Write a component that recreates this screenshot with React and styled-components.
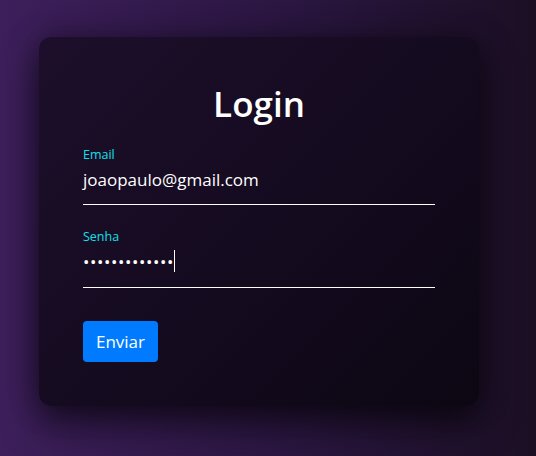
import React from "react";
import styled, { createGlobalStyle } from "styled-components";

const Global = createGlobalStyle`
  html, body { margin: 0; padding: 0; }
  body {
    width: 536px;
    height: 456px;
    overflow: hidden;
    font-family: "Open Sans", "Noto Sans", sans-serif;
    background: linear-gradient(to right, #3d1f5b 0%, #2c1743 50%, #1b0f24 100%);
  }
`;

const Page = styled.div`
  box-sizing: border-box;
  width: 536px;
  height: 456px;
  padding: 37px 57px 0 39px;
`;

const Card = styled.form`
  box-sizing: border-box;
  width: 440px;
  height: 369px;
  border-radius: 12px;
  padding: 40px 44px 0;
  background: linear-gradient(135deg, #1d0f2b 0%, #150b20 50%, #0c0713 100%);
  box-shadow: 0 18px 36px rgba(0, 0, 0, 0.55), 0 0 30px rgba(0, 0, 0, 0.35);
  display: flex;
  flex-direction: column;
`;

const Title = styled.h1`
  margin: 0 0 16px;
  text-align: center;
  color: #ffffff;
  font-size: 35px;
  font-weight: 600;
  line-height: 54px;
`;

const Field = styled.div`
  display: flex;
  flex-direction: column;
  margin-bottom: ${(p) => p.$gap}px;
`;

const Label = styled.label`
  color: #0ee0ee;
  font-size: 12.5px;
  line-height: 16px;
`;

const Value = styled.div`
  box-sizing: border-box;
  color: #ffffff;
  font-size: 17px;
  line-height: 24px;
  height: ${(p) => p.$h}px;
  padding-top: 5px;
  border-bottom: 1px solid #ffffff;
  display: flex;
  align-items: flex-start;
`;

const Dots = styled.span`
  font-size: 17px;
  letter-spacing: 0.6px;
  line-height: 24px;
`;

const Caret = styled.span`
  display: inline-block;
  width: 1px;
  height: 22px;
  background: #ffffff;
`;

const Button = styled.button`
  align-self: flex-start;
  width: 75px;
  height: 41px;
  border: none;
  border-radius: 4px;
  background: #007bff;
  color: #ffffff;
  font-family: "Open Sans", "Noto Sans", sans-serif;
  font-size: 17px;
  padding: 0;
`;

export default function App() {
  return (
    <>
      <Global />
      <Page>
        <Card onSubmit={(e) => e.preventDefault()}>
          <Title>Login</Title>
          <Field $gap={24}>
            <Label>Email</Label>
            <Value $h={42}>joaopaulo@gmail.com</Value>
          </Field>
          <Field $gap={33}>
            <Label>Senha</Label>
            <Value $h={43}>
              <Dots>{"•••••••••••••"}</Dots>
              <Caret />
            </Value>
          </Field>
          <Button type="submit">Enviar</Button>
        </Card>
      </Page>
    </>
  );
}
